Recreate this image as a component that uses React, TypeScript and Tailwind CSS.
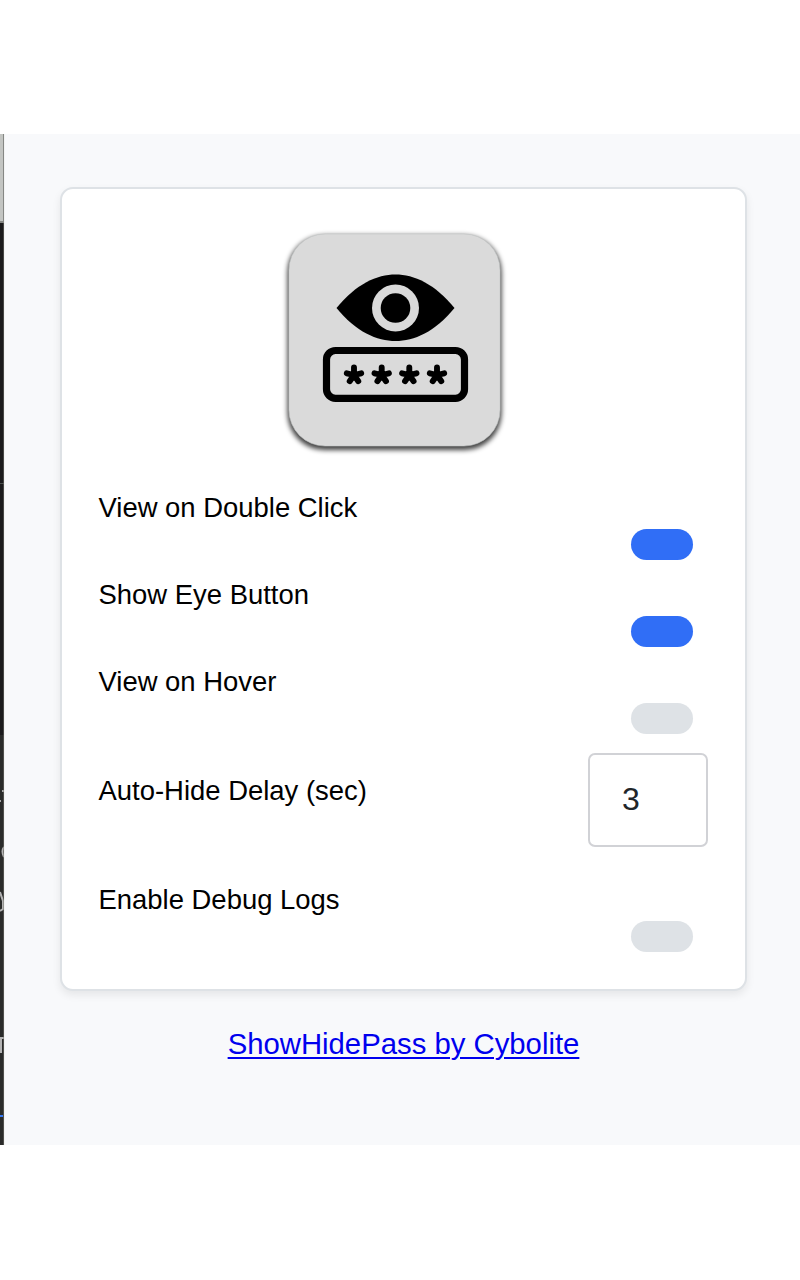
import { useState } from "react";

function Logo() {
  const stars = [354, 381.7, 409.3, 437];
  return (
    <svg className="ml-[213px] block h-60 w-60" viewBox="275 220 240 240" aria-label="ShowHidePass">
      <defs>
        <filter id="tile-shadow" x="-20%" y="-20%" width="140%" height="140%">
          <feGaussianBlur stdDeviation="2.6" />
        </filter>
      </defs>
      <rect x="287.5" y="235.500" width="214" height="214.500" rx="37" fill="#000" fillOpacity="0.75" filter="url(#tile-shadow)" />
      <rect x="289" y="234" width="211" height="212" rx="36" fill="#dadada" stroke="#c4c8c8" strokeWidth="0.6" />
      <path d="M336.5 308C356 284 377 274.5 395.500 274.500S435 284 454.500 308C435 332 414 341 395.500 341S356 332 336.500 308Z" />
      <circle cx="395.500" cy="308" r="23.500" fill="#dadada" />
      <circle cx="395.500" cy="308" r="14.800" />
      <rect x="326.500" y="350.500" width="138" height="47.800" rx="9" fill="none" stroke="#000" strokeWidth="7.200" />
      {stars.map((x) => (
        <path
          key={x}
          transform={`translate(${x} 375)`}
          d="M0 0V-7.500M0 0L7.200 -1.700M0 0L4.300 6.200M0 0L-4.300 6.200M0 0L-7.200 -1.700"
          stroke="#000"
          strokeWidth="5.900"
          strokeLinecap="round"
        />
      ))}
    </svg>
  );
}

function SwitchRow({ label, initial = false }: { label: string; initial?: boolean }) {
  const [on, setOn] = useState(initial);
  return (
    <div className="flex h-[87.100px] flex-col">
      <span className="h-8 text-[27.450px] leading-8">{label}</span>
      <button
        role="switch"
        aria-checked={on}
        aria-label={label}
        onClick={() => setOn(!on)}
        className={`mt-[5px] mr-[15px] h-[31px] w-[62px] self-end rounded-full ${on ? "bg-[#306ef6]" : "bg-[#dee2e6]"}`}
      />
    </div>
  );
}

function WindowEdge() {
  return (
    <div className="flex h-full w-[5px] shrink-0 overflow-hidden border-r border-[#f2f3f2]">
      <svg className="h-full w-full" viewBox="0 0 4 1011" preserveAspectRatio="none" aria-hidden="true">
        <path fill="#1b1b1c" d="M0 0h4v1011H0z" />
        <path fill="#c3c5c2" d="M0 0h3v87H0z" />
        <path fill="#858784" d="M3 0h1v89H3zM0 87h4v2H0z" />
        <path fill="#2a2b2a" d="M0 601h4v410H0z" />
        <path fill="#4c504e" d="M0 349h4v1H0z" />
        <path fill="#aaa" d="M2 656h2v2H2zM0 666h1v2H0z" />
        <path fill="none" stroke="#b4b4b4" strokeWidth="2" d="M4 713q-3 4 0 10M0 758l3 9v8l-3 2M0 904h4M1 904v15" />
        <path fill="#3478f6" d="M0 981h3v2H0z" />
        <path fill="#74756f" d="M3.500 89h.5v922h-.5z" />
      </svg>
    </div>
  );
}

export default function App() {
  const [delay, setDelay] = useState("3");
  return (
    <main className="h-[1280px] w-[800px] bg-white pt-[134px] font-['Liberation_Sans',Arial,sans-serif] text-black">
      <div className="flex h-[1011px] bg-[#f8f9fb]">
        <WindowEdge />
        <div className="flex flex-1 flex-col items-center pr-[49px] pl-[51px] pt-[53px]">
          <section className="h-[804px] w-[687px] rounded-[13px] border-2 border-[#dee2e6] bg-white pt-[31px] shadow-[0_4px_9px_rgba(0,0,0,0.08)]">
            <Logo />
            <div className="mt-[32px] pr-[37px] pl-[36.500px]">
              <SwitchRow label="View on Double Click" initial />
              <SwitchRow label="Show Eye Button" initial />
              <SwitchRow label="View on Hover" />
              <div className="flex h-[131px] items-start justify-between">
                <label htmlFor="delay" className="mt-[22px] text-[27.450px] leading-8">
                  Auto-Hide Delay (sec)
                </label>
                <input
                  id="delay"
                  value={delay}
                  onChange={(e) => setDelay(e.target.value)}
                  className="h-[94px] w-[120px] rounded-[7px] border-2 border-[#d1d2d6] bg-white px-8 pb-[2px] text-[32px] text-[#212529]"
                />
              </div>
              <SwitchRow label="Enable Debug Logs" />
            </div>
          </section>
          <a href="#" className="mt-[36px] text-[29.300px] leading-[34px] text-[#0000ee] underline decoration-2 underline-offset-[3px]">
            ShowHidePass by Cybolite
          </a>
        </div>
      </div>
    </main>
  );
}
